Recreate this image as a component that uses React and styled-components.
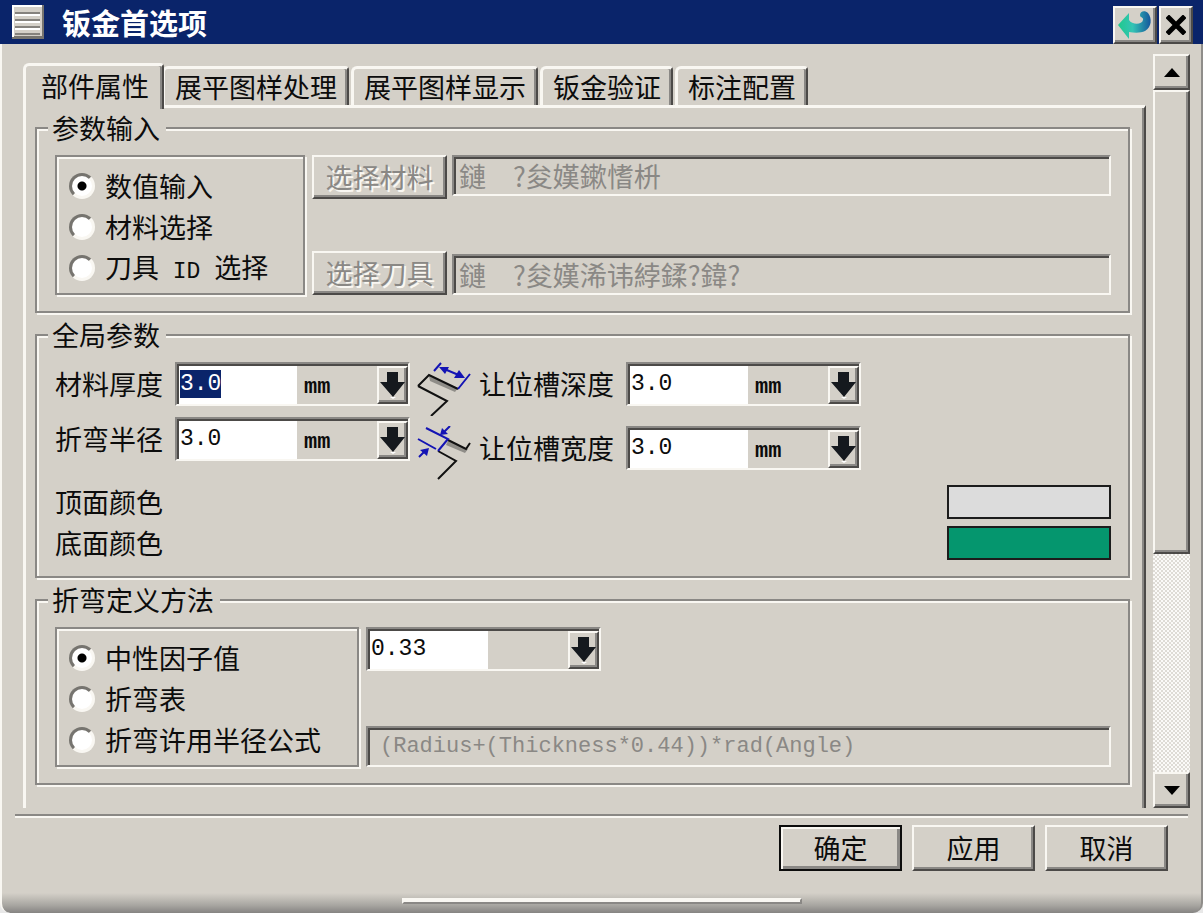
import React, { useEffect, useRef, useState } from 'react';
import styled, { createGlobalStyle, css } from 'styled-components';

const face = '#d4d0c8';
const light = '#f9f7f2';
const mid = '#8a8885';
const dark = '#4c4a48';
const navy = '#0a246a';

const GlobalStyle = createGlobalStyle`
  * {
    box-sizing: border-box;
  }
  body {
    margin: 0;
    background: #e8e8e8;
  }
  body, button, input {
    font-family: 'Noto Sans CJK SC', sans-serif;
    font-size: 27px;
    line-height: 28px;
    color: #0c0c0c;
  }
  button, input {
    margin: 0;
    padding: 0;
    border-radius: 0;
    outline: none;
  }
`;

const raised = css`
  background: ${face};
  border: 2px solid;
  border-color: ${light} ${dark} ${dark} ${light};
  box-shadow: inset -2px -2px ${mid};
`;

const sunken = css`
  border: 2px solid;
  border-color: ${mid} ${light} ${light} ${mid};
  box-shadow: inset 2px 2px ${dark};
`;

const etched = css`
  border: 2px solid ${mid};
  box-shadow: inset 2px 2px ${light}, 2px 2px ${light};
`;

const Window = styled.div`
  display: flex;
  flex-direction: column;
  min-height: 100vh;
  background: linear-gradient(to top, #858482 0, #a9a7a2 8px, ${face} 20px);
  border-left: 2px solid ${light};
  border-right: 2px solid #8f8d8a;
  border-radius: 0 0 10px 10px;
`;

const TitleBar = styled.header`
  display: flex;
  align-items: center;
  gap: 2px;
  height: 44px;
  margin: 0 -2px;
  padding: 0 10px 0 12px;
  background: ${navy};
`;

const Title = styled.h1`
  flex: 1;
  margin: 0 0 0 16px;
  font-size: 29px;
  line-height: 40px;
  font-weight: 700;
  color: #fff;
`;

const TitleButton = styled.button`
  ${raised}
  display: flex;
  align-items: center;
  justify-content: center;
  align-self: flex-end;
  width: ${({ $width }) => $width}px;
  height: 38px;
`;

const Main = styled.main`
  display: flex;
  gap: 7px;
  padding: 10px 11px 6px 21px;
`;

const Sheet = styled.div`
  flex: 1;
  min-width: 0;
  padding-top: 9px;
`;

const TabStrip = styled.div`
  position: relative;
  z-index: 1;
  display: flex;
  align-items: flex-end;
  gap: 2px;
  height: 42px;
`;

const Tab = styled.button`
  height: 39px;
  padding: 0 10px;
  white-space: nowrap;
  background: ${face};
  border: solid;
  border-width: 3px 2px 0 3px;
  border-color: ${light} ${dark} ${light} ${light};
  border-radius: 6px 4px 0 0;
  box-shadow: inset -2px 0 ${mid};

  ${({ $active }) =>
    $active &&
    css`
      z-index: 1;
      height: 46px;
      margin: 0 -4px -4px 0;
      padding: 0 13px 4px 15px;
    `}
`;

const Panel = styled.div`
  display: flex;
  flex-direction: column;
  gap: 8px;
  padding: 6px 14px 23px 9px;
  border: solid;
  border-width: 3px 2px 0 3px;
  border-color: ${light} ${dark} ${light} ${light};
  box-shadow: inset -2px 0 ${mid};
`;

const Group = styled.fieldset`
  ${etched}
  min-width: 0;
  margin: 0;
  padding: 13px 17px 16px 18px;
`;

const Legend = styled.legend`
  margin-left: -7px;
  padding: 0 6px 0 4px;
  background: ${face};
`;

const Columns = styled.div`
  display: flex;
  gap: ${({ $gap }) => $gap || 7}px;
`;

const Stack = styled.div`
  display: flex;
  flex-direction: column;
  gap: ${({ $gap }) => $gap || 0}px;
`;

const Spread = styled(Stack)`
  flex: 1;
  min-width: 0;
  justify-content: space-between;
`;

const RadioBox = styled.div`
  ${etched}
  display: flex;
  flex-direction: column;
  width: ${({ $width }) => $width}px;
  height: 140px;
  padding: 8px 12px 5px;
`;

const RadioLabel = styled.label`
  display: flex;
  align-items: center;
  gap: 10px;
  height: 41px;
  white-space: pre;
`;

const Radio = styled.input`
  appearance: none;
  width: 26px;
  height: 26px;
  border: 3px solid;
  border-color: #76746f ${light} ${light} #76746f;
  border-radius: 50%;
  background: #fff;

  &:checked {
    background: radial-gradient(circle, #000 0 4px, #fff 5px);
  }
`;

const Latin = styled.span`
  font-family: 'Liberation Mono', monospace;
  font-size: 23px;
  line-height: 20px;
`;

const FieldRow = styled.div`
  display: flex;
  align-items: ${({ $align }) => $align};
  gap: 5px;
`;

const PickButton = styled.button`
  ${raised}
  width: 135px;
  height: 44px;
  color: ${mid};
  text-shadow: 2px 2px ${light};
`;

const Field = styled.input`
  ${sunken}
  flex: 1;
  min-width: 0;
  width: 100%;
  height: 41px;
  padding: 0 5px;
  background: ${face};
  color: ${mid};
`;

const Formula = styled(Field)`
  flex: none;
  padding: 0 12px;
  font-family: 'Liberation Mono', monospace;
  font-size: 22px;
`;

const ComboBox = styled.div`
  ${sunken}
  display: flex;
  align-items: stretch;
  width: 235px;
  height: 44px;
  padding: 2px 0 0 2px;
`;

const ComboInput = styled.input`
  width: 118px;
  padding: 0 0 3px 1px;
  border: 0;
  background: #fff;
  font-family: 'Liberation Mono', monospace;
  font-size: 23px;

  &::selection {
    background: ${navy};
    color: #fff;
  }
`;

const Unit = styled.span`
  flex: 1;
  padding: 8px 0 0 7px;
  font-family: 'Liberation Mono', monospace;
  font-size: 22px;
  font-weight: 700;
`;

const ComboButton = styled.button`
  ${raised}
  display: flex;
  align-items: center;
  justify-content: center;
  width: 31px;
`;

const Caption = styled.label`
  display: flex;
  align-items: center;
  height: 44px;
  white-space: nowrap;
`;

const ColorRow = styled.div`
  display: flex;
  justify-content: space-between;
  align-items: center;
`;

const Swatch = styled.button`
  width: 164px;
  height: 34px;
  border: 2px solid #1c1c1c;
  background: ${({ $color }) => $color};
`;

const ScrollBar = styled.div`
  display: flex;
  flex-direction: column;
  width: 37px;
`;

const ScrollButton = styled.button`
  ${raised}
  display: flex;
  align-items: center;
  justify-content: center;
  height: 36px;
`;

const Track = styled.div`
  flex: 1;
  background: repeating-conic-gradient(#fbfaf8 0 25%, #dedbd5 0 50%) 0 0 / 4px 4px;
`;

const Thumb = styled.div`
  ${raised}
  height: 68%;
`;

const Divider = styled.hr`
  width: auto;
  margin: 0 13px 0 13px;
  border: 0;
  border-top: 2px solid ${mid};
  border-bottom: 2px solid ${light};
`;

const Actions = styled.footer`
  display: flex;
  justify-content: flex-end;
  gap: 10px;
  padding: 7px 33px 0;
`;

const Action = styled.button`
  ${raised}
  width: 123px;
  height: 46px;

  ${({ $primary }) =>
    $primary &&
    css`
      border-color: #0c0c0c;
      box-shadow: inset 2px 2px ${light}, inset -3px -3px ${mid};
    `}
`;

const Grip = styled.div`
  width: 400px;
  height: 6px;
  margin: auto auto 9px;
  border: 2px solid;
  border-color: ${light} ${mid} ${mid} ${light};
  background: ${light};
`;

const SheetIcon = () => (
  <svg width="32" height="34" viewBox="0 0 32 34" aria-hidden="true">
    <path d="M0 0h32v34H0z" fill="#76746f" />
    <path d="M0 0h30v31H0z" fill="#d4d0c8" />
    <path d="M0 0h30v2H2v30H0z" fill="#fff" />
    <path d="M3 8h25M3 15h25M3 22h25M3 29h25" stroke="#85827d" strokeWidth="2" />
    <path d="M3 10h25M3 17h25M3 24h25" stroke="#fff" strokeWidth="2" />
  </svg>
);

const ResetIcon = () => (
  <svg width="36" height="32" viewBox="0 0 36 32" aria-hidden="true">
    <defs>
      <linearGradient id="reset" x1="0" x2="1">
        <stop offset="0" stopColor="#1fc98c" />
        <stop offset="0.45" stopColor="#35c4b5" />
        <stop offset="1" stopColor="#14569c" />
      </linearGradient>
    </defs>
    <path
      d="M1 16L12 4v7c3 5 13 5 14 0 1-3-3-2-3-5 0-4 5-5 8-2 4 5 4 14-3 18-4 2-10 2-16 1v7z"
      fill="url(#reset)"
    />
  </svg>
);

const CloseIcon = () => (
  <svg width="20" height="20" viewBox="0 0 20 20" aria-hidden="true">
    <path d="M3 3l14 14M17 3L3 17" stroke="#000" strokeWidth="5" strokeLinecap="square" />
  </svg>
);

const ArrowIcon = () => (
  <svg width="27" height="28" viewBox="0 0 27 28" aria-hidden="true">
    <path d="M8 1h11v10h7L14 26 1 11h7z" fill="#15191e" />
    <path d="M11 26l3 2 3-2z" fill="#fff" />
  </svg>
);

const DepthIcon = () => (
  <svg width="54" height="54" viewBox="0 0 54 54" fill="none" aria-hidden="true">
    <path d="M12 14l29 12-3 4-25-11z" fill="#8f8d88" />
    <path d="M1 24l11-11 29 14M1 24l29 15-16 15" stroke="#111" strokeWidth="2" />
    <path d="M17 9l7-8M41 27l12-15" stroke="#1414b4" strokeWidth="2" />
    <path d="M25 6l19 8" stroke="#1414b4" strokeWidth="2" />
    <path d="M22 5l10 0-4 7zM48 16l-11 0 5-8z" fill="#1414b4" />
  </svg>
);

const WidthIcon = () => (
  <svg width="54" height="54" viewBox="0 0 54 54" fill="none" aria-hidden="true">
    <path d="M31 15l20 8-3 4-19-8z" fill="#8f8d88" />
    <path d="M31 14l18 9 4-6M21 25l18 10-18 18" stroke="#111" strokeWidth="2" />
    <path d="M9 2l22 11-10 12M1 13l18 10" stroke="#1414b4" strokeWidth="2" />
    <path d="M33 0l-7 7M2 31l7-7" stroke="#1414b4" strokeWidth="2" />
    <path d="M23 9l2-7 6 6zM12 22l-9 2 7 6z" fill="#1414b4" />
  </svg>
);

const Triangle = ({ down }) => (
  <svg width="16" height="9" viewBox="0 0 16 9" aria-hidden="true">
    <path d={down ? 'M0 0h16L8 9z' : 'M8 0l8 9H0z'} fill="#000" />
  </svg>
);

const Combo = ({ id, value, unit, selected, label }) => {
  const input = useRef(null);

  useEffect(() => {
    if (selected) {
      input.current.focus();
      input.current.select();
    }
  }, [selected]);

  return (
    <ComboBox>
      <ComboInput id={id} ref={input} defaultValue={value} aria-label={label} />
      <Unit>{unit}</Unit>
      <ComboButton type="button" aria-label="选项">
        <ArrowIcon />
      </ComboButton>
    </ComboBox>
  );
};

const RadioGroup = ({ name, width, options }) => {
  const [current, setCurrent] = useState(0);

  return (
    <RadioBox $width={width}>
      {options.map((option, i) => (
        <RadioLabel key={i}>
          <Radio
            type="radio"
            name={name}
            checked={current === i}
            onChange={() => setCurrent(i)}
          />
          <span>{option}</span>
        </RadioLabel>
      ))}
    </RadioBox>
  );
};

const tabs = ['部件属性', '展平图样处理', '展平图样显示', '钣金验证', '标注配置'];

const App = () => {
  const [tab, setTab] = useState(0);

  return (
    <>
      <GlobalStyle />
      <Window>
        <TitleBar>
          <SheetIcon />
          <Title>钣金首选项</Title>
          <TitleButton $width={44} type="button" aria-label="重置">
            <ResetIcon />
          </TitleButton>
          <TitleButton $width={34} type="button" aria-label="关闭">
            <CloseIcon />
          </TitleButton>
        </TitleBar>
        <Main>
          <Sheet>
            <TabStrip role="tablist">
              {tabs.map((name, i) => (
                <Tab
                  key={name}
                  type="button"
                  role="tab"
                  aria-selected={tab === i}
                  $active={tab === i}
                  onClick={() => setTab(i)}
                >
                  {name}
                </Tab>
              ))}
            </TabStrip>
            <Panel>
              <Group>
                <Legend>参数输入</Legend>
                <Columns>
                  <RadioGroup
                    name="source"
                    width={250}
                    options={[
                      '数值输入',
                      '材料选择',
                      <>
                        刀具<Latin> ID </Latin>选择
                      </>,
                    ]}
                  />
                  <Spread>
                    <FieldRow $align="flex-start">
                      <PickButton type="button" disabled>
                        选择材料
                      </PickButton>
                      <Field
                        disabled
                        aria-label="材料"
                        defaultValue={'鏈\u3000?夋嫨鏉愭枡'}
                      />
                    </FieldRow>
                    <FieldRow $align="flex-end">
                      <PickButton type="button" disabled>
                        选择刀具
                      </PickButton>
                      <Field
                        disabled
                        aria-label="刀具"
                        defaultValue={'鏈\u3000?夋嫨浠讳綍鍒?鍏?'}
                      />
                    </FieldRow>
                  </Spread>
                </Columns>
              </Group>

              <Group>
                <Legend>全局参数</Legend>
                <Stack $gap={5}>
                  <Columns>
                    <Stack $gap={11}>
                      <Columns $gap={12}>
                        <Caption htmlFor="thickness">材料厚度</Caption>
                        <Combo id="thickness" value="3.0" unit="mm" selected />
                      </Columns>
                      <Columns $gap={12}>
                        <Caption htmlFor="radius">折弯半径</Caption>
                        <Combo id="radius" value="3.0" unit="mm" />
                      </Columns>
                    </Stack>
                    <Stack $gap={10}>
                      <Columns $gap={8}>
                        <DepthIcon />
                        <Columns $gap={12}>
                          <Caption htmlFor="depth">让位槽深度</Caption>
                          <Combo id="depth" value="3.0" unit="mm" />
                        </Columns>
                      </Columns>
                      <Columns $gap={8}>
                        <WidthIcon />
                        <Columns $gap={12}>
                          <Caption htmlFor="width">让位槽宽度</Caption>
                          <Combo id="width" value="3.0" unit="mm" />
                        </Columns>
                      </Columns>
                    </Stack>
                  </Columns>
                  <Stack $gap={7}>
                    <ColorRow>
                      <span>顶面颜色</span>
                      <Swatch type="button" aria-label="顶面颜色" $color="#dcdcdc" />
                    </ColorRow>
                    <ColorRow>
                      <span>底面颜色</span>
                      <Swatch type="button" aria-label="底面颜色" $color="#05966e" />
                    </ColorRow>
                  </Stack>
                </Stack>
              </Group>

              <Group>
                <Legend>折弯定义方法</Legend>
                <Columns>
                  <RadioGroup
                    name="method"
                    width={304}
                    options={['中性因子值', '折弯表', '折弯许用半径公式']}
                  />
                  <Spread>
                    <Combo value="0.33" label="中性因子值" />
                    <Formula
                      disabled
                      aria-label="折弯许用半径公式"
                      defaultValue="(Radius+(Thickness*0.44))*rad(Angle)"
                    />
                  </Spread>
                </Columns>
              </Group>
            </Panel>
          </Sheet>
          <ScrollBar>
            <ScrollButton type="button" aria-label="向上滚动">
              <Triangle />
            </ScrollButton>
            <Track>
              <Thumb />
            </Track>
            <ScrollButton type="button" aria-label="向下滚动">
              <Triangle down />
            </ScrollButton>
          </ScrollBar>
        </Main>
        <Divider />
        <Actions>
          <Action type="button" $primary>
            确定
          </Action>
          <Action type="button">应用</Action>
          <Action type="button">取消</Action>
        </Actions>
        <Grip />
      </Window>
    </>
  );
};

export default App;
